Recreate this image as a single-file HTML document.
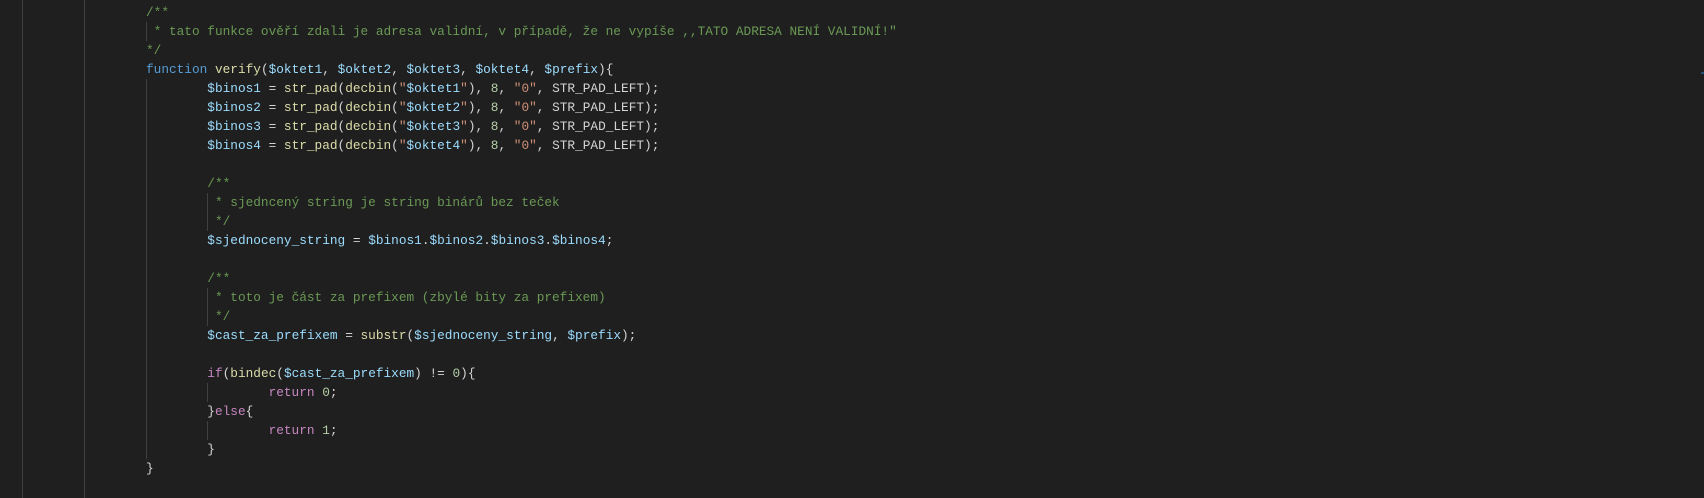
<!DOCTYPE html>
<html><head><meta charset="utf-8"><style>
html,body{margin:0;padding:0;background:#1f1f1f;width:1704px;height:498px;overflow:hidden}
pre{position:absolute;left:146px;top:-16px;margin:0;font-family:"Liberation Mono",monospace;font-size:12.78px;line-height:19px;color:#d4d4d4;tab-size:8;-moz-tab-size:8;white-space:pre}
.c{color:#6a9955}.k{color:#569cd6}.f{color:#dcdcaa}.v{color:#9cdcfe}.s{color:#ce9178}.n{color:#b5cea8}.r{color:#c586c0}
.g{position:absolute;width:1px;background:#404040}
</style></head><body>
<div class="g" style="left:22px;top:0;height:498px"></div>
<div class="g" style="left:84px;top:0;height:498px"></div>
<div class="g" style="left:146px;top:22px;height:19px"></div>
<div class="g" style="left:146px;top:79px;height:380px"></div>
<div class="g" style="left:207px;top:193px;height:38px"></div>
<div class="g" style="left:207px;top:288px;height:38px"></div>
<div class="g" style="left:207px;top:383px;height:19px"></div>
<div class="g" style="left:207px;top:421px;height:19px"></div>
<div style="position:absolute;left:1701px;top:72px;width:3px;height:2px;background:#264f78"></div>
<pre><span>}</span>
<span class="c">/**</span>
<span class="c"> * tato funkce ověří zdali je adresa validní, v případě, že ne vypíše ,,TATO ADRESA NENÍ VALIDNÍ!"</span>
<span class="c">*/</span>
<span class="k">function</span> <span class="f">verify</span>(<span class="v">$oktet1</span>, <span class="v">$oktet2</span>, <span class="v">$oktet3</span>, <span class="v">$oktet4</span>, <span class="v">$prefix</span>){
	<span class="v">$binos1</span> = <span class="f">str_pad</span>(<span class="f">decbin</span>(<span class="s">"</span><span class="v">$oktet1</span><span class="s">"</span>), <span class="n">8</span>, <span class="s">"0"</span>, STR_PAD_LEFT);
	<span class="v">$binos2</span> = <span class="f">str_pad</span>(<span class="f">decbin</span>(<span class="s">"</span><span class="v">$oktet2</span><span class="s">"</span>), <span class="n">8</span>, <span class="s">"0"</span>, STR_PAD_LEFT);
	<span class="v">$binos3</span> = <span class="f">str_pad</span>(<span class="f">decbin</span>(<span class="s">"</span><span class="v">$oktet3</span><span class="s">"</span>), <span class="n">8</span>, <span class="s">"0"</span>, STR_PAD_LEFT);
	<span class="v">$binos4</span> = <span class="f">str_pad</span>(<span class="f">decbin</span>(<span class="s">"</span><span class="v">$oktet4</span><span class="s">"</span>), <span class="n">8</span>, <span class="s">"0"</span>, STR_PAD_LEFT);

	<span class="c">/**</span>
	<span class="c"> * sjedncený string je string binárů bez teček</span>
	<span class="c"> */</span>
	<span class="v">$sjednoceny_string</span> = <span class="v">$binos1</span>.<span class="v">$binos2</span>.<span class="v">$binos3</span>.<span class="v">$binos4</span>;

	<span class="c">/**</span>
	<span class="c"> * toto je část za prefixem (zbylé bity za prefixem)</span>
	<span class="c"> */</span>
	<span class="v">$cast_za_prefixem</span> = <span class="f">substr</span>(<span class="v">$sjednoceny_string</span>, <span class="v">$prefix</span>);

	<span class="r">if</span>(<span class="f">bindec</span>(<span class="v">$cast_za_prefixem</span>) != <span class="n">0</span>){
		<span class="r">return</span> <span class="n">0</span>;
	}<span class="r">else</span>{
		<span class="r">return</span> <span class="n">1</span>;
	}
}</pre>
</body></html>
